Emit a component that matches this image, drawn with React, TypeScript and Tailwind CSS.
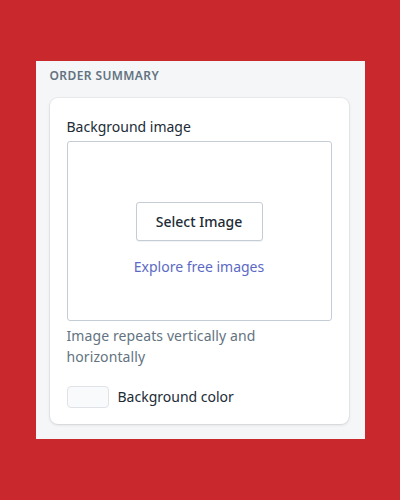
export default function App() {
  return (
    <div
      className="w-[400px] h-[500px] bg-[#c9292d] flex items-center justify-center"
      style={{ fontFamily: '"Noto Sans", "Open Sans", sans-serif' }}
    >
      <div className="w-[329px] h-[378px] bg-[#f4f6f8] pl-[14px] pr-[16px] pt-[6px]">
        <div className="text-[12px] font-semibold tracking-[0.4px] text-[#637381] leading-[16px] h-[31px] pt-[1px]">
          ORDER SUMMARY
        </div>
        <div className="bg-white rounded-[8px] shadow-[0_0_0_1px_rgba(63,63,68,0.05),0_1px_3px_0_rgba(63,63,68,0.15)] px-[17px] pt-[18px] pb-[16px]">
          <div className="text-[14px] text-[#212b36] leading-[22px] mb-[3px]">Background image</div>
          <div className="h-[180px] border border-[#c4cdd5] rounded-[3px] flex flex-col items-center pt-[60px]">
            <button className="w-[127px] h-[39px] border border-[#c4cdd5] rounded-[3px] bg-white shadow-[0_1px_0_0_rgba(22,29,37,0.05)] text-[14px] font-medium text-[#212b36]">
              Select Image
            </button>
            <div className="mt-[16px] text-[14px] text-[#5c6ac4] leading-[20px]">Explore free images</div>
          </div>
          <div className="mt-[4px] text-[14px] tracking-[0.1px] text-[#637381] leading-[21px]">
            Image repeats vertically and
            <br />
            horizontally
          </div>
          <div className="mt-[19px] flex items-center gap-[9px]">
            <div className="w-[42px] h-[22px] rounded-[4px] border border-[#dfe3e8] bg-[#f9fafb]" />
            <div className="text-[14px] text-[#212b36] leading-[20px]">Background color</div>
          </div>
        </div>
      </div>
    </div>
  );
}
